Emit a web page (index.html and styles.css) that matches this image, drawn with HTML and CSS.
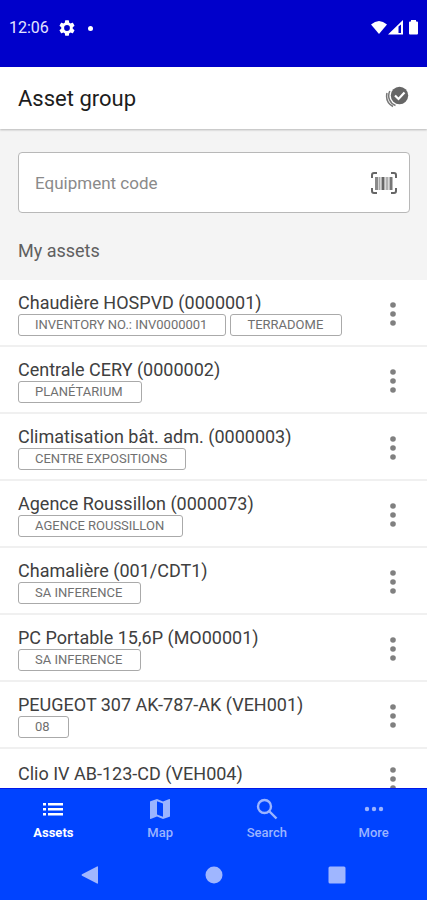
FILE: index.html
```html
<!DOCTYPE html>
<html lang="en">
<head>
<meta charset="utf-8">
<meta name="viewport" content="width=device-width, initial-scale=1">
<title>Asset group</title>
<link rel="stylesheet" href="styles.css">
</head>
<body>
<svg class="sprite" aria-hidden="true">
  <symbol id="dots" viewBox="0 0 8 24"><circle cx="4" cy="3" r="2.800"/><circle cx="4" cy="12" r="2.800"/><circle cx="4" cy="21" r="2.800"/></symbol>
</svg>
<div class="status">
  <span class="clock">12:06</span>
  <svg class="gear" viewBox="2 2 20 20" aria-hidden="true"><path d="M19.14 12.94c.04-.3.06-.61.06-.94s-.02-.64-.07-.94l2.03-1.58a.49.49 0 0 0 .12-.61l-1.92-3.32a.49.49 0 0 0-.59-.22l-2.39.96a7 7 0 0 0-1.62-.94l-.36-2.54A.48.48 0 0 0 13.920 2.400h-3.840a.48.48 0 0 0-.47.41l-.36 2.540a7 7 0 0 0-1.620.94l-2.390-.96a.49.49 0 0 0-.59.22L2.740 8.870a.48.48 0 0 0 .12.61l2.030 1.580c-.05.3-.09.63-.09.94s.02.64.07.94l-2.030 1.580a.49.49 0 0 0-.12.61l1.920 3.320c.12.22.37.29.59.22l2.390-.96c.5.38 1.030.7 1.620.94l.36 2.540c.05.24.24.41.48.41h3.840c.24 0 .44-.17.47-.41l.36-2.540a7 7 0 0 0 1.620-.94l2.390.96c.22.08.47 0 .59-.22l1.920-3.320a.48.48 0 0 0-.12-.61zM12 15.600a3.600 3.600 0 1 1 0-7.200 3.600 3.600 0 0 1 0 7.200z"/></svg>
  <span class="notice"></span>
  <svg class="signals" viewBox="0 0 50 16" aria-hidden="true">
    <path d="M0 4.500Q8 -2.500 16 4.500L8 14z"/>
    <path fill-rule="evenodd" d="M17 14.500L32 0v14.500zM27.500 6.500v6.500h2.500v-8.500z"/>
    <path d="M40 1.500V0h5v1.500h1q1 0 1 1v11q0 1-1 1h-7q-1 0-1-1v-11q0-1 1-1z"/>
  </svg>
</div>
<header class="bar">
  <h1>Asset group</h1>
  <button class="icon" aria-label="Select assets">
    <svg width="24" height="22" viewBox="0 0 24 22"><circle cx="14.500" cy="9.500" r="8.700" fill="#666"/><path d="M10 9.500l3.500 3.500 6-6.500" fill="none" stroke="#fff" stroke-width="2.200"/><path d="M4.800 5A10.500 10.500 0 0 0 10.500 19.500M2 7Q0 16 8 20.500" fill="none" stroke="#777" stroke-width="1.500"/></svg>
  </button>
</header>
<section class="search">
  <div class="field">
    <input type="text" aria-label="Equipment code" placeholder="Equipment code">
    <button class="icon" aria-label="Scan barcode">
      <svg width="28" height="24" viewBox="0 0 28 24" fill="none"><path d="M2 7V4q0-2 2-2h3M21 2h3q2 0 2 2v3M26 17v3q0 2-2 2h-3M7 22H4q-2 0-2-2v-3" stroke="#666" stroke-width="2"/><path d="M6.500 6v13" stroke="#8a8a8a" stroke-width="3"/><path d="M9.500 6v13" stroke="#aaa" stroke-width="2"/><path d="M13 6v13" stroke="#666" stroke-width="3"/><path d="M17 6v13" stroke="#b0b0b0" stroke-width="3"/><path d="M21 6v13" stroke="#777" stroke-width="3"/></svg>
    </button>
  </div>
  <h2>My assets</h2>
</section>
<main>
<ul class="list">
  <li><div class="text"><h3>Chaudière HOSPVD (0000001)</h3><div class="tags"><span>INVENTORY NO.: INV0000001</span><span>TERRADOME</span></div></div><button class="icon" aria-label="Options"><svg class="dots"><use href="#dots"/></svg></button></li>
  <li><div class="text"><h3>Centrale CERY (0000002)</h3><div class="tags"><span>PLANÉTARIUM</span></div></div><button class="icon" aria-label="Options"><svg class="dots"><use href="#dots"/></svg></button></li>
  <li><div class="text"><h3>Climatisation bât. adm. (0000003)</h3><div class="tags"><span>CENTRE EXPOSITIONS</span></div></div><button class="icon" aria-label="Options"><svg class="dots"><use href="#dots"/></svg></button></li>
  <li><div class="text"><h3>Agence Roussillon (0000073)</h3><div class="tags"><span>AGENCE ROUSSILLON</span></div></div><button class="icon" aria-label="Options"><svg class="dots"><use href="#dots"/></svg></button></li>
  <li><div class="text"><h3>Chamalière (001/CDT1)</h3><div class="tags"><span>SA INFERENCE</span></div></div><button class="icon" aria-label="Options"><svg class="dots"><use href="#dots"/></svg></button></li>
  <li><div class="text"><h3>PC Portable 15,6P (MO00001)</h3><div class="tags"><span>SA INFERENCE</span></div></div><button class="icon" aria-label="Options"><svg class="dots"><use href="#dots"/></svg></button></li>
  <li><div class="text"><h3>PEUGEOT 307 AK-787-AK (VEH001)</h3><div class="tags"><span>08</span></div></div><button class="icon" aria-label="Options"><svg class="dots"><use href="#dots"/></svg></button></li>
  <li class="plain"><div class="text"><h3>Clio IV AB-123-CD (VEH004)</h3></div><button class="icon" aria-label="Options"><svg class="dots"><use href="#dots"/></svg></button></li>
</ul>
</main>
<footer>
  <nav class="tabs">
    <a href="#assets" class="active" aria-current="page"><svg viewBox="0 0 24 24"><path d="M2 6h3v2.500H2zM7 6h15v2.500H7zM2 11h3v2.500H2zM7 11h15v2.500H7zM2 16h3v2.500H2zM7 16h15v2.500H7z"/></svg>Assets</a>
    <a href="#map"><svg viewBox="0 0 24 24"><path fill-rule="evenodd" d="M21.500 2l-.2 0L15 4.400 9 2 2.400 4.200Q2 4.400 2 4.800V21.500q0 .5.600.400L9 19.600l6 2.400 6.600-2.200q.4-.2.400-.600V2.500q0-.5-.5-.5zM15 19.700l-6-2.300V4.300l6 2.300z"/></svg>Map</a>
    <a href="#search"><svg viewBox="0 0 24 24"><g fill="none" stroke="currentColor" stroke-width="2.400"><circle cx="9.500" cy="9.500" r="6.500"/><path d="M14.500 14.500l7 7"/></g></svg>Search</a>
    <a href="#more"><svg viewBox="0 0 24 24"><circle cx="5" cy="12" r="2.200"/><circle cx="12" cy="12" r="2.200"/><circle cx="19" cy="12" r="2.200"/></svg>More</a>
  </nav>
  <div class="system">
    <button class="icon" aria-label="Back"><svg width="18" height="18" viewBox="0 0 18 18"><path d="M17 1v16q0 1-1 .5L1 9.800q-1-.8 0-1.600L16 .5q1-.5 1 .5z"/></svg></button>
    <button class="icon" aria-label="Home"><svg width="18" height="18" viewBox="0 0 18 18"><circle cx="9" cy="9" r="8.500"/></svg></button>
    <button class="icon" aria-label="Recent apps"><svg width="18" height="18" viewBox="0 0 18 18"><rect x="0.500" y="0.500" width="17" height="17" rx="1.500"/></svg></button>
  </div>
</footer>
</body>
</html>
```
FILE: styles.css
```css
* {
  box-sizing: border-box;
}

body {
  margin: 0;
  height: 100vh;
  display: flex;
  flex-direction: column;
  background: #fff;
  color: #404040;
  font-family: Roboto, "Liberation Sans", sans-serif;
}

h1, h2, h3, ul {
  margin: 0;
  padding: 0;
  font-weight: 400;
}

.sprite {
  position: absolute;
  width: 0;
  height: 0;
}

.icon {
  display: flex;
  padding: 0;
  border: 0;
  background: none;
}

.status {
  display: flex;
  align-items: center;
  padding: 16px 6px 27px 9px;
  background: #0000cb;
  color: #e4e4ff;
  fill: #fff;
}

.clock {
  font-size: 16px;
  line-height: 24px;
}

.gear {
  width: 16px;
  height: 16px;
  margin-left: 10px;
}

.notice {
  width: 5px;
  height: 5px;
  margin-left: 13px;
  border-radius: 50%;
  background: #fff;
}

.signals {
  width: 50px;
  height: 16px;
  margin-left: auto;
}

.bar {
  position: relative;
  display: flex;
  align-items: center;
  justify-content: space-between;
  padding: 16px 18px 14px;
  background: #fff;
  box-shadow: 0 1px 2px rgba(0, 0, 0, 0.25);
}

.bar h1 {
  color: #1c1c1c;
  font-size: 22px;
  line-height: 32px;
}

.bar .icon {
  padding-bottom: 4px;
}

.search {
  padding: 23px 17px 17px 18px;
  background: #f4f4f4;
}

.field {
  display: flex;
  align-items: center;
  padding: 0 11px 0 16px;
  border: 1px solid #b8b8b8;
  border-radius: 4px;
  background: #fff;
}

.field input {
  flex: 1;
  min-width: 0;
  height: 59px;
  padding: 0;
  border: 0;
  outline: 0;
  background: none;
  color: #404040;
  font: 17px Roboto, "Liberation Sans", sans-serif;
}

.field input::placeholder {
  color: #8a8a8a;
}

.search h2 {
  margin-top: 26px;
  color: #606060;
  font-size: 18px;
  line-height: 24px;
}

main {
  flex: 1;
  min-height: 0;
  overflow: hidden;
}

.list {
  list-style: none;
}

.list li {
  display: flex;
  align-items: center;
  justify-content: space-between;
  padding: 12px 30px 9px 18px;
  border-bottom: 2px solid #f0f0f0;
}

.list .plain {
  align-items: flex-start;
  padding-top: 14px;
  padding-bottom: 20px;
}

.plain .icon {
  padding-top: 4px;
}

.list h3 {
  font-size: 18px;
  line-height: 22px;
}

.tags {
  display: flex;
  gap: 4px;
}

.tags span {
  padding: 0 18px 0 16px;
  border: 1px solid #aaa;
  border-radius: 3px;
  color: #707070;
  font-size: 13px;
  line-height: 20px;
}

.dots {
  width: 8px;
  height: 24px;
  fill: #808080;
}

footer {
  border-top: 1px solid #0018e8;
  background: #0043ff;
}

.tabs {
  display: flex;
}

.tabs a {
  flex: 1;
  display: flex;
  flex-direction: column;
  align-items: center;
  gap: 4px;
  padding: 8px 0;
  color: #9bb4ff;
  fill: currentColor;
  font-size: 13px;
  font-weight: 500;
  line-height: 16px;
  text-decoration: none;
}

.tabs .active {
  color: #fff;
  font-weight: 700;
}

.tabs svg {
  width: 24px;
  height: 24px;
}

.system {
  display: flex;
  justify-content: space-between;
  padding: 17px 81px 16px;
  fill: #9fb6ff;
}
```
